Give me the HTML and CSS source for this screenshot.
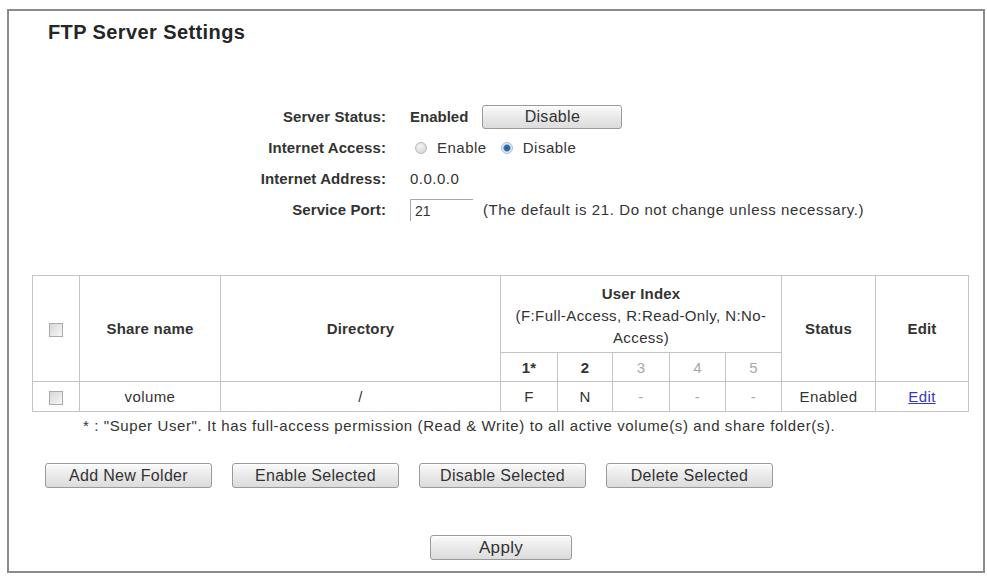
FILE: index.html
```html
<!DOCTYPE html>
<html lang="en">
<head>
    <meta charset="UTF-8">
    <title>FTP Server Settings</title>
    <link rel="stylesheet" href="styles.css">
</head>
<body>
    <div class="panel">
        <h1 class="title">FTP Server Settings</h1>

        <div class="settings">
            <div class="label">Server Status:</div>
            <div class="value"><b class="status">Enabled</b><button class="btn btn-status">Disable</button></div>

            <div class="label">Internet Access:</div>
            <div class="value">
                <input type="radio" name="access" class="radio" id="acc_on">
                <label for="acc_on" class="radio-text">Enable</label>
                <input type="radio" name="access" class="radio" id="acc_off" checked>
                <label for="acc_off" class="radio-text">Disable</label>
            </div>

            <div class="label">Internet Address:</div>
            <div class="value">0.0.0.0</div>

            <div class="label">Service Port:</div>
            <div class="value"><input type="text" class="port" value="21"><span class="hint">(The default is 21. Do not change unless necessary.)</span></div>
        </div>

        <table class="shares">
            <colgroup>
                <col style="width:47px">
                <col style="width:141px">
                <col style="width:280px">
                <col style="width:57px">
                <col style="width:55px">
                <col style="width:57px">
                <col style="width:56px">
                <col style="width:56px">
                <col style="width:94px">
                <col style="width:93px">
            </colgroup>
            <tr class="head-top">
                <th rowspan="2"><input type="checkbox" class="check"></th>
                <th rowspan="2">Share name</th>
                <th rowspan="2">Directory</th>
                <th colspan="5" class="user-index">User Index<br><span class="legend">(F:Full-Access, R:Read-Only, N:No-Access)</span></th>
                <th rowspan="2">Status</th>
                <th rowspan="2">Edit</th>
            </tr>
            <tr class="head-sub">
                <th>1*</th>
                <th>2</th>
                <th class="off">3</th>
                <th class="off">4</th>
                <th class="off">5</th>
            </tr>
            <tr class="row">
                <td><input type="checkbox" class="check"></td>
                <td>volume</td>
                <td>/</td>
                <td>F</td>
                <td>N</td>
                <td class="off">-</td>
                <td class="off">-</td>
                <td class="off">-</td>
                <td>Enabled</td>
                <td><a href="#" class="edit">Edit</a></td>
            </tr>
        </table>

        <p class="note">* : "Super User". It has full-access permission (Read &amp; Write) to all active volume(s) and share folder(s).</p>

        <div class="actions">
            <button class="btn btn-wide">Add New Folder</button>
            <button class="btn btn-wide">Enable Selected</button>
            <button class="btn btn-wide">Disable Selected</button>
            <button class="btn btn-wide">Delete Selected</button>
        </div>

        <div class="apply-row">
            <button class="btn btn-apply">Apply</button>
        </div>
    </div>
</body>
</html>
```

FILE: styles.css
```css
body {
    margin: 0;
    font-family: "Liberation Sans", Arial, sans-serif;
    color: #333;
    background: #fff;
}
.panel {
    box-sizing: border-box;
    width: 978px;
    height: 564px;
    margin: 9px 0 0 7px;
    border: 2px solid #8c8c8c;
}
.title {
    margin: 9px 0 0 39px;
    font-size: 20px;
    line-height: 24px;
    letter-spacing: 0.4px;
    font-weight: bold;
    color: #262626;
}
.settings {
    display: grid;
    grid-template-columns: 377px 1fr;
    grid-auto-rows: 31px;
    column-gap: 24px;
    align-items: center;
    margin-top: 57px;
}
.label {
    text-align: right;
    font-weight: bold;
    font-size: 15px;
    letter-spacing: 0.1px;
}
.value {
    display: flex;
    align-items: center;
    font-size: 15px;
    letter-spacing: 0.5px;
}
.status {
    font-size: 15px;
    letter-spacing: 0;
    margin-right: 14px;
}
.btn {
    font-family: "Liberation Sans", Arial, sans-serif;
    font-size: 16px;
    letter-spacing: 0.3px;
    color: #333;
    background: linear-gradient(#fbfbfb, #e9e9e9 50%, #dcdcdc);
    border: 1px solid #9a9a9a;
    border-radius: 3px;
    box-shadow: inset 0 1px 0 #fff;
    padding: 0;
    cursor: pointer;
}
.btn-status {
    width: 140px;
    height: 24px;
}
.radio {
    appearance: none;
    width: 12px;
    height: 12px;
    margin: 0 10px 0 5px;
    border: 1px solid #b9b9b9;
    border-radius: 50%;
    background: radial-gradient(circle at 40% 35%, #f4f4f4, #cfcfcf);
}
.radio:checked {
    border-color: #a9bfd4;
    background: radial-gradient(circle, #25578a 0, #3b79b3 3px, #dbe6f0 4px, #eef3f7 6px);
}
.radio + .radio-text + .radio {
    margin-left: 14px;
}
.radio-text {
    color: #333;
}
.port {
    box-sizing: border-box;
    width: 63px;
    height: 22px;
    padding: 1px 4px 0;
    border: 0;
    border-top: 1px solid #a8a8a8;
    border-left: 1px solid #a8a8a8;
    font-family: "Liberation Sans", Arial, sans-serif;
    font-size: 14px;
    color: #333;
    outline: none;
}
.hint {
    margin-left: 10px;
    letter-spacing: 0.6px;
}
.shares {
    width: 936px;
    margin: 50px 0 0 23px;
    table-layout: fixed;
    border-collapse: collapse;
    border: 1px solid #c4c4c4;
}
.shares th, .shares td {
    border: 1px solid #c4c4c4;
    padding: 0;
    text-align: center;
    font-size: 15px;
}
.shares th {
    font-weight: bold;
    letter-spacing: 0.2px;
}
.shares td {
    letter-spacing: 0.4px;
}
.head-top {
    height: 77px;
}
.head-sub {
    height: 29px;
}
.row {
    height: 30px;
}
.user-index {
    line-height: 22px;
    padding: 4px 6px 0 !important;
}
.legend {
    font-weight: normal;
    letter-spacing: 0.4px;
}
.off {
    color: #a8a8a8;
    font-weight: normal !important;
}
.check {
    appearance: none;
    width: 14px;
    height: 14px;
    margin: 0;
    vertical-align: middle;
    border: 1px solid #aaa;
    background: linear-gradient(135deg, #d8d8d8, #f6f6f6);
}
.edit {
    color: #3a3ab8;
    text-decoration: underline;
}
.note {
    margin: 5px 0 0 74px;
    font-size: 15px;
    line-height: 18px;
    letter-spacing: 0.6px;
}
.actions {
    display: flex;
    gap: 20px;
    margin-top: 28px;
    padding-left: 36px;
}
.btn-wide {
    width: 167px;
    height: 25px;
}
.apply-row {
    margin-top: 47px;
    padding-left: 421px;
}
.btn-apply {
    width: 142px;
    height: 25px;
    font-size: 17px;
}
```
